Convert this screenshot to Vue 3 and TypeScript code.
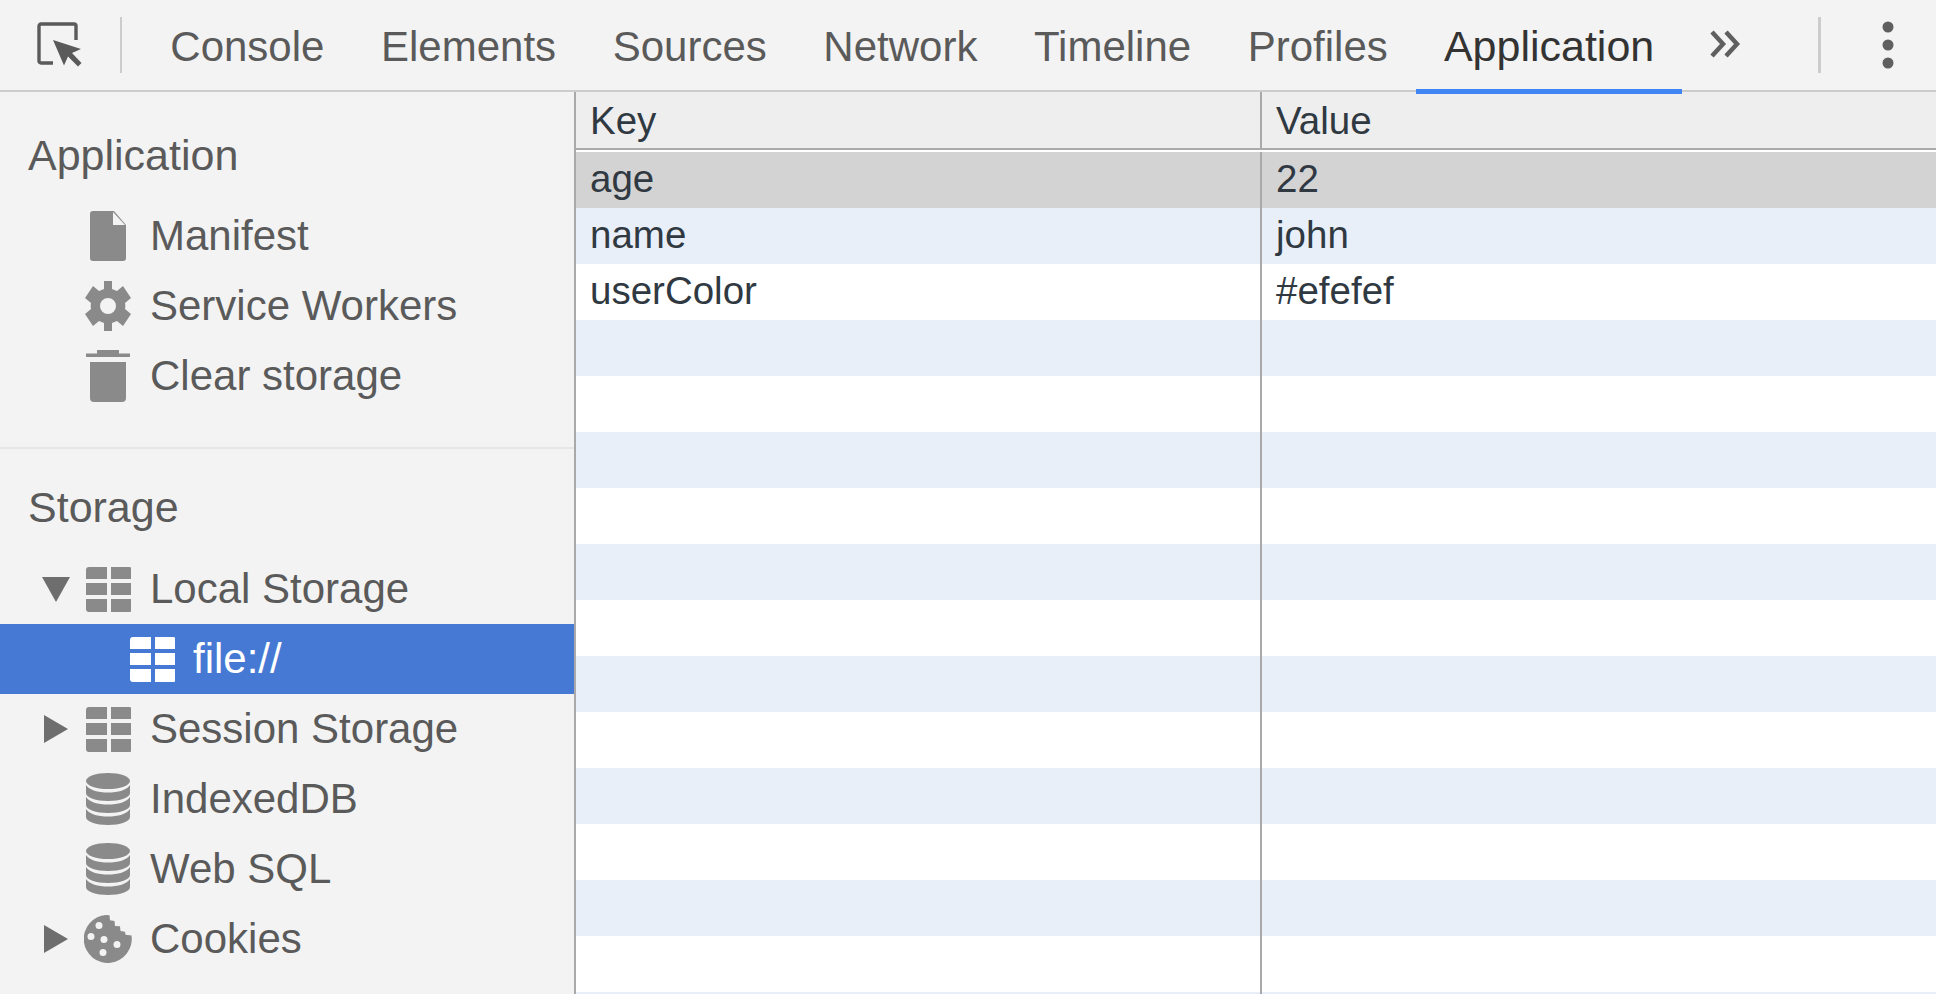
<script setup lang="ts">
type Item = { label: string; icon: string; arrow?: 'down' | 'right'; child?: boolean; selected?: boolean };

const tabs = ['Console', 'Elements', 'Sources', 'Network', 'Timeline', 'Profiles', 'Application'];
const appItems: Item[] = [
  { label: 'Manifest', icon: 'file' },
  { label: 'Service Workers', icon: 'gear' },
  { label: 'Clear storage', icon: 'trash' },
];
const storageItems: Item[] = [
  { label: 'Local Storage', icon: 'grid', arrow: 'down' },
  { label: 'file://', icon: 'grid', child: true, selected: true },
  { label: 'Session Storage', icon: 'grid', arrow: 'right' },
  { label: 'IndexedDB', icon: 'db' },
  { label: 'Web SQL', icon: 'db' },
  { label: 'Cookies', icon: 'cookie', arrow: 'right' },
];
const groups = [
  { title: 'Application', items: appItems },
  { title: 'Storage', items: storageItems },
];
const rows = [
  ['age', '22'],
  ['name', 'john'],
  ['userColor', '#efefef'],
  ...Array.from({ length: 13 }, () => ['', '']),
];
</script>

<template>
  <div class="devtools">
    <header class="toolbar">
      <div class="inspect soft">
        <svg width="48" height="50" viewBox="0 0 48 50">
          <path d="M17 42H5a2 2 0 0 1-2-2V5a2 2 0 0 1 2-2h33a2 2 0 0 1 2 2v14" fill="none" stroke="#5a5a5a" stroke-width="3.4" />
          <path d="M17 19l28 9-9 4 9.500 10-3.500 3.500-10-10-4 9z" fill="#5a5a5a" />
        </svg>
      </div>
      <span class="tool-sep"></span>
      <nav class="tabs">
        <span v-for="t in tabs" :key="t" class="tab" :class="{ active: t === 'Application' }">{{ t }}</span>
      </nav>
      <svg class="more soft" width="34" height="28" viewBox="0 0 34 28">
        <path d="M3 2l11 12L3 26M17 2l11 12-11 12" fill="none" stroke="#5f5f5f" stroke-width="4.500" />
      </svg>
      <span class="tool-sep right"></span>
      <svg class="dots soft" width="14" height="48" viewBox="0 0 14 48">
        <circle cx="7" cy="6" r="5.500" fill="#5f5f5f" />
        <circle cx="7" cy="24" r="5.500" fill="#5f5f5f" />
        <circle cx="7" cy="42" r="5.500" fill="#5f5f5f" />
      </svg>
    </header>

    <div class="body">
      <aside class="sidebar">
        <section v-for="g in groups" :key="g.title" class="group">
          <h2 class="group-title">{{ g.title }}</h2>
          <div v-for="it in g.items" :key="it.label" class="item" :class="{ selected: it.selected, child: it.child }">
            <span class="arrow soft">
              <svg v-if="it.arrow === 'down'" width="28" height="26" viewBox="0 0 28 26"><path d="M0 1h28L14 26z" fill="#6e6e6e" /></svg>
              <svg v-else-if="it.arrow === 'right'" width="24" height="28" viewBox="0 0 24 28"><path d="M0 0l24 14L0 28z" fill="#6e6e6e" /></svg>
            </span>
            <span class="icon soft">
              <svg v-if="it.icon === 'file'" width="36" height="50" viewBox="0 0 36 50">
                <path d="M3 0h21l12 14v33a3 3 0 0 1-3 3H3a3 3 0 0 1-3-3V3a3 3 0 0 1 3-3z" fill="currentColor" />
                <path d="M23 1v13h12z" fill="#f3f3f3" />
              </svg>
              <svg v-else-if="it.icon === 'gear'" width="48" height="50" viewBox="0 0 48 50">
                <path fill="currentColor" fill-rule="evenodd" d="M20 0h8v8l5 2 6-5 8 12-6 5c.5 2 .5 4 0 6l6 5-8 12-6-5-5 2v8h-8v-8l-5-2-6 5-8-12 6-5c-.5-2-.5-4 0-6l-6-5L9 5l6 5 5-2zM24 17a8 8 0 1 0 0 16 8 8 0 0 0 0-16z" />
              </svg>
              <svg v-else-if="it.icon === 'trash'" width="44" height="52" viewBox="0 0 44 52">
                <path fill="currentColor" d="M11 0h22v3.500h11V7H0V3.500h11zM4 12h36v36a4 4 0 0 1-4 4H8a4 4 0 0 1-4-4z" />
              </svg>
              <svg v-else-if="it.icon === 'grid'" width="46" height="45" viewBox="-1 0 46 45">
                <path fill="currentColor" d="M3 0h18v12H0V3a3 3 0 0 1 3-3zM25 0h18a3 3 0 0 1 3 3v9H25zM0 16h21v12H0zM25 16h21v12H25zM0 32h21v13H3a3 3 0 0 1-3-3zM25 32h21v10a3 3 0 0 1-3 3H25z" />
              </svg>
              <svg v-else-if="it.icon === 'db'" width="44" height="52" viewBox="0 0 44 52">
                <ellipse cx="22" cy="8" rx="22" ry="8" fill="currentColor" />
                <path fill="currentColor" d="M0 12c3 5 12 7.500 22 7.500S41 17 44 12v8c0 4.500-10 8-22 8S0 24.500 0 20zM0 24c3 5 12 7.500 22 7.500S41 29 44 24v8c0 4.500-10 8-22 8S0 36.500 0 32zM0 36c3 5 12 7.500 22 7.500S41 41 44 36v8c0 4.500-10 8-22 8S0 48.500 0 44z" />
              </svg>
              <svg v-else width="48" height="48" viewBox="2 0 48 48">
                <path fill="currentColor" fill-rule="evenodd" d="M24 0l3.500.3.500 5 4.500.7.500 5 5 .3.500 4.700 4.500.7.500 3 6 .8A24 24 0 1 1 24 0zM17 7a3.500 3.500 0 1 0 0 7 3.500 3.500 0 0 0 0-7zM9 18a3.500 3.500 0 1 0 0 7 3.500 3.500 0 0 0 0-7zM22 21a3.500 3.500 0 1 0 0 7 3.500 3.500 0 0 0 0-7zM35 26a3.500 3.500 0 1 0 0 7 3.500 3.500 0 0 0 0-7zM21 34a3.500 3.500 0 1 0 0 7 3.500 3.500 0 0 0 0-7z" />
              </svg>
            </span>
            <span class="label">{{ it.label }}</span>
          </div>
        </section>
      </aside>

      <main class="table">
        <div class="row head">
          <div class="cell first">Key</div>
          <div class="cell">Value</div>
        </div>
        <div class="head-gap"></div>
        <div v-for="(r, i) in rows" :key="i" class="row data" :class="{ picked: i === 0, odd: i % 2 === 1 }">
          <div class="cell first">{{ r[0] }}</div>
          <div class="cell">{{ r[1] }}</div>
        </div>
      </main>
    </div>
  </div>
</template>

<style>
html, body { margin: 0; height: 100%; overflow: hidden; background: #fff; }
</style>

<style scoped>
.devtools {
  width: 1936px;
  height: 994px;
  display: flex;
  flex-direction: column;
  overflow: hidden;
  font-family: "Liberation Sans", Arial, sans-serif;
}
.soft { filter: blur(0.5px); }
.toolbar {
  height: 90px;
  flex: none;
  display: flex;
  align-items: center;
  background: #f3f3f3;
  border-bottom: 2px solid #ccc;
  padding-left: 36px;
}
.inspect { width: 48px; height: 50px; margin-top: 2px; }
.tool-sep { width: 2px; height: 56px; background: #ccc; margin-left: 36px; flex: none; }
.tool-sep.right { width: 3px; margin-left: 75px; }
.tabs { display: flex; margin-left: 20px; height: 94px; align-self: flex-start; position: relative; z-index: 1; }
.tab {
  box-sizing: border-box;
  height: 94px;
  line-height: 94px;
  padding: 0 28.3px;
  font-size: 42px;
  color: #5a5a5a;
  white-space: nowrap;
}
.tab.active { color: #333; border-bottom: 5px solid #3f86f4; font-size: 43px; line-height: 92px; padding: 0 27.8px; }
.more { margin-left: 27px; flex: none; margin-bottom: 2px; }
.dots { margin-left: 60px; flex: none; }
.body { flex: 1; min-height: 0; display: flex; }
.sidebar {
  width: 574px;
  flex: none;
  background: #f3f3f3;
  border-right: 2px solid #a9a9a9;
}
.group { padding-bottom: 36px; }
.group + .group { border-top: 2px solid #e6e6e6; }
.group-title {
  margin: 0;
  height: 109px;
  line-height: 126px;
  padding-left: 28px;
  font-size: 43px;
  font-weight: 400;
  color: #5a5a5a;
}
.group + .group .group-title { height: 105px; line-height: 116px; }
.item {
  height: 70px;
  display: flex;
  align-items: center;
  padding-left: 36px;
  color: #8a8a8a;
}
.item.child { padding-left: 80px; }
.item.selected { background: #4679d3; color: #fff; }
.arrow { width: 40px; flex: none; display: flex; justify-content: center; }
.icon { width: 56px; margin-left: 4px; margin-right: 14px; flex: none; display: flex; justify-content: center; }
.child .icon { margin-right: 13px; }
.label { font-size: 42px; line-height: 72px; color: #5a5a5a; white-space: nowrap; }
.selected .label { color: #fff; }
.table { flex: 1; min-width: 0; display: flex; flex-direction: column; overflow: hidden; background: #fff; }
.row { display: flex; flex: none; color: #303942; font-size: 38.5px; }
.cell { flex: 1; padding-left: 14px; white-space: nowrap; }
.cell.first { flex: none; width: 686px; box-sizing: border-box; border-right: 2px solid #a9a9a9; }
.head { height: 56px; line-height: 58px; background: #eee; border-bottom: 2px solid #aaa; }
.head-gap { height: 2px; flex: none; background: #fff; }
.data { height: 56px; line-height: 54px; }
.data.odd { background: #e9eff8; }
.data.picked { background: #d3d3d3; }
</style>
